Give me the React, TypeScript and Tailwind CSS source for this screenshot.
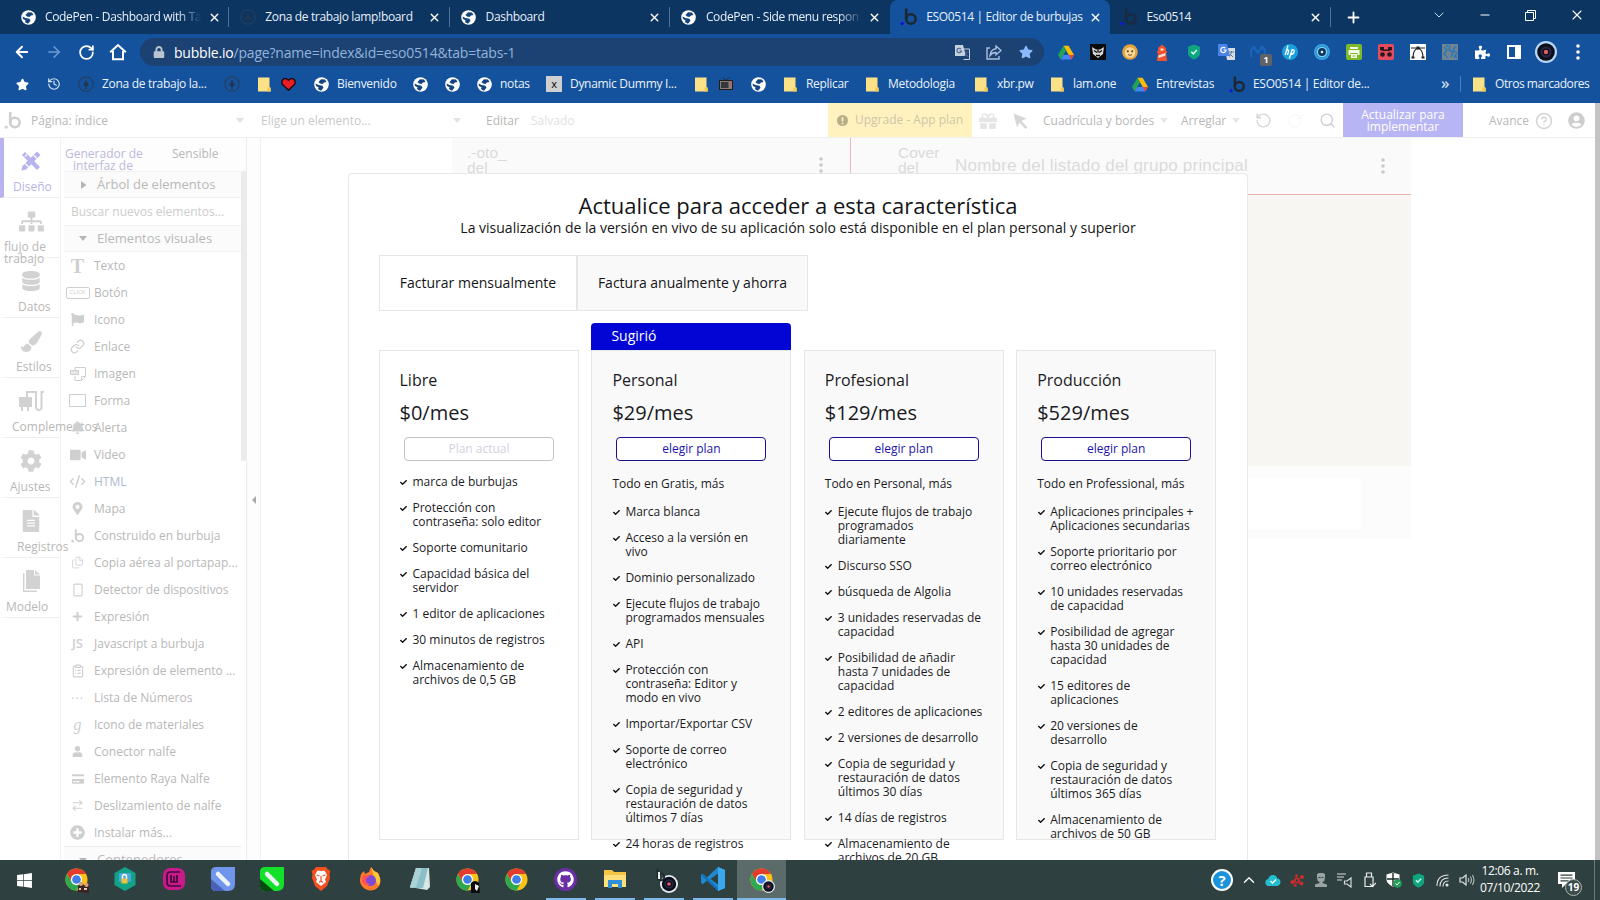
import React from "react";
import {
  FaGlobeAmericas, FaStar, FaPuzzlePiece, FaSitemap, FaDatabase, FaPaintBrush, FaCog, FaFileAlt, FaFlag,
  FaBell, FaVideo, FaMapMarkerAlt, FaPlus, FaUser, FaPlusCircle, FaWindows, FaGift,
  FaUserCircle, FaGithub, FaLock, FaCheck, FaCreditCard,
} from "react-icons/fa";
import {
  ArrowLeft, ArrowRight, RotateCw, X, Plus, ChevronDown, ChevronUp, Minus, Link, CodeXml, Files, Smartphone,
  ClipboardList, History, CircleHelp, Search, RotateCcw, ArrowRightLeft,
} from "lucide-react";

type Kids = { children?: React.ReactNode; className?: string };

const Cell = ({ children, className = "w-8" }: Kids) => (
  <div className={"flex shrink-0 items-center justify-center " + className}>{children}</div>
);

const Bubble = ({ size = 18, body = "#1c2733", dot = "#1010e0" }) => (
  <svg width={size} height={size} viewBox="0 0 18 18" fill="none">
    <path d="M6.2 0.5V11" stroke={body} strokeWidth="2.6" />
    <circle cx="10.9" cy="11" r="4.7" stroke={body} strokeWidth="2.6" />
    <circle cx="2.2" cy="15.6" r="1.7" fill={dot} />
  </svg>
);

const Lamp = () => (
  <svg width="16" height="16" viewBox="0 0 16 16" fill="none">
    <circle cx="8" cy="8" r="7.2" stroke="#24405f" strokeWidth="1.2" />
    <path d="M8 3.5l3 6.5H5z" fill="#24364d" />
    <path d="M8 10v3" stroke="#24364d" strokeWidth="1.5" />
  </svg>
);

const Globe = () => (
  <svg width="15" height="15" viewBox="0 0 15 15">
    <circle cx="7.5" cy="7.5" r="7.300" fill="#fff" />
    <path d="M7 2.200l4 .3 1.500 2.500-2.500.5-1.500 1.500-2.500-.5L4.500 5z" fill="#15457f" />
    <path d="M1.500 6.500l3 1.500 4 .8 1 2-2.500 3-3-1.500.5-2L2 9z" fill="#15457f" />
  </svg>
);

const Folder = () => (
  <svg width="13" height="15" viewBox="0 0 13 15">
    <path d="M0 0.5h11.5V10l1.2 1v3.5H0z" fill="#fce287" />
    <path d="M9.5 10.5h3v4h-3z" fill="#f2c94c" />
  </svg>
);

const Drive = () => (
  <svg width="16" height="15" viewBox="0 0 16 15">
    <path d="M5.4 0.8h5.2L16 10h-5.2z" fill="#fbbc04" />
    <path d="M5.4 0.8L8 5.3 2.7 14.4 0 10z" fill="#23a455" />
    <path d="M5.3 10H16l-2.7 4.4H2.7z" fill="#4285f4" />
    <path d="M10.8 10H16l-2.7 4.4z" fill="#ea4335" />
  </svg>
);

const Chrome = ({ size = 23 }) => (
  <svg width={size} height={size} viewBox="0 0 24 24">
    <circle cx="12" cy="12" r="11.5" fill="#fbc116" />
    <path d="M2.04 6.25A11.5 11.5 0 0 1 21.96 6.25H12A5.75 5.75 0 0 0 7 14.9z" fill="#e33b2e" />
    <path d="M2.04 6.25L7 14.9A5.75 5.75 0 0 0 17 14.9L12 23.5A11.5 11.5 0 0 1 2.04 6.25z" fill="#2da94f" />
    <circle cx="12" cy="12" r="5.8" fill="#fff" />
    <circle cx="12" cy="12" r="4.5" fill="#3f7ee8" />
  </svg>
);

const Disc = ({ size = 20, ring = "#b9d7f5" }) => (
  <svg width={size} height={size} viewBox="0 0 22 22">
    <circle cx="11" cy="11" r="11" fill={ring} />
    <circle cx="11" cy="11" r="8.8" fill="#0b0f1c" />
    <circle cx="11" cy="11" r="4.6" fill="none" stroke="#2b2740" strokeWidth="2" />
    <circle cx="11" cy="11" r="2.2" fill="#e65a6b" />
  </svg>
);

const ShieldOk = ({ size = 16 }) => (
  <svg width={size} height={size} viewBox="0 0 16 16">
    <path d="M8 0.5l6 2.3v6.4c0 2.8-3 5.2-6 6.3-3-1.1-6-3.5-6-6.3V2.8z" fill="#0fa57f" />
    <path d="M5.3 7.8l2 2 3.6-3.8" fill="none" stroke="#d6fff2" strokeWidth="1.5" />
  </svg>
);

const Home = () => (
  <svg width="18" height="18" viewBox="0 0 18 18" fill="none" stroke="#fff" strokeWidth="2">
    <path d="M1.2 9.3L9 2l7.8 7.3" />
    <path d="M4 8v8.2h10V8" />
  </svg>
);

const Kebab = ({ color = "#fff" }) => (
  <svg width="4" height="16" viewBox="0 0 4 16" fill={color}>
    <circle cx="2" cy="2" r="1.8" />
    <circle cx="2" cy="8" r="1.8" />
    <circle cx="2" cy="14" r="1.8" />
  </svg>
);

const Caret = ({ className = "" }) => (
  <svg className={className} width="8" height="5" viewBox="0 0 8 5">
    <path d="M0 0h8L4 5z" fill="currentColor" />
  </svg>
);

const tabs = [
  { icon: <Globe />, title: "CodePen - Dashboard with Ta", fade: true },
  { icon: <Lamp />, title: "Zona de trabajo lamp!board" },
  { icon: <Globe />, title: "Dashboard" },
  { icon: <Globe />, title: "CodePen - Side menu respon", fade: true, last: true },
  { icon: <Bubble />, title: "ESO0514 | Editor de burbujas", active: true },
  { icon: <Bubble body="#1a2b40" />, title: "Eso0514" },
];

const TabStrip = () => (
  <div className="flex h-[34px] items-stretch bg-[#0d3562] pl-[9px] text-[12px] text-[#e6f0fa]">
    {tabs.map((t) => (
      <div
        key={t.title}
        className={
          "flex w-[220.3px] shrink-0 items-center " +
          (t.active ? "rounded-t-lg bg-[#14529d]" : "")
        }
      >
        <Cell className="ml-[9px] w-5">{t.icon}</Cell>
        <div
          className={
            "ml-[7px] w-[158px] overflow-hidden whitespace-nowrap tracking-[-0.35px] " +
            (t.fade ? "[mask-image:linear-gradient(to_right,black_84%,transparent_99%)]" : "")
          }
        >
          {t.title}
        </div>
        <Cell className="ml-[3px] w-4">
          <X size={13} strokeWidth={2.6} color="#fff" />
        </Cell>
        <div className={"ml-auto h-5 w-px " + (t.active || t.last ? "" : "bg-[#4f7299]")} />
      </div>
    ))}
    <Cell className="ml-[3px] w-10"><Plus size={17} strokeWidth={2.6} color="#fff" /></Cell>
    <Cell className="ml-[40px] w-[50px] pb-1"><ChevronDown size={16} strokeWidth={1.5} color="#cfe0f2" /></Cell>
    <Cell className="w-[43px] pb-1"><Minus size={14} strokeWidth={1.8} color="#fff" /></Cell>
    <Cell className="w-[47px] pb-1">
      <svg width="11" height="11" viewBox="0 0 11 11" fill="none" stroke="#fff">
        <path d="M0.5 2.5h8v8h-8zM2.5 2.5v-2h8v8h-2" />
      </svg>
    </Cell>
    <Cell className="w-[46px] pb-1"><X size={16} strokeWidth={1.6} color="#fff" /></Cell>
  </div>
);

const extensions: React.ReactNode[] = [
  <Drive />,
  <svg width="16" height="16" viewBox="0 0 16 16"><rect width="16" height="16" fill="#0a0a0c" /><path d="M2 3l4 2.5h4L14 3l-1 7-5 4-5-4z" fill="#d8d8d8" /><path d="M4 6.5l3 2M12 6.5l-3 2M6 11.5h4M8 5.5v3" stroke="#0a0a0c" strokeWidth="1.3" /></svg>,
  <svg width="16" height="16" viewBox="0 0 16 16"><circle cx="8" cy="8" r="7.8" fill="#e8a23a" /><circle cx="8" cy="8.5" r="5.3" fill="#f6d79a" /><circle cx="5.8" cy="7.3" r="1" fill="#5a3411" /><circle cx="10.2" cy="7.3" r="1" fill="#5a3411" /><path d="M6 10.5q2 1.8 4 0" stroke="#8a4b17" fill="none" /></svg>,
  <svg width="16" height="17" viewBox="0 0 16 17"><path d="M4 4L8 0.5 12 4v3h1v2h-1l1.2 8H2.8L4 9H3V7h1z" fill="#f0512e" /><path d="M4.5 11.5l7-2.5v2.5l-7 2.5zM6.5 4.5h3v2h-3z" fill="#ffe8d8" /></svg>,
  <ShieldOk />,
  <svg width="17" height="16" viewBox="0 0 17 16"><path d="M7 4h10v12H9z" fill="#d8dde4" /><path d="M0 0h9l3 12H0z" fill="#4a83ea" /><path d="M7.3 4.2A2.6 2.6 0 1 0 8 6H5.5" fill="none" stroke="#fff" strokeWidth="1.2" /><path d="M11 8h5M13.5 7v1.5l-2 4M12 10l3 3" stroke="#68788e" fill="none" /></svg>,
  <div className="relative">
    <svg width="16" height="14" viewBox="0 0 16 14"><path d="M1 12V5l3-3 4 6 4-6 3 3v7" fill="none" stroke="#1b63b4" strokeWidth="2.6" /></svg>
    <div className="absolute top-[9px] left-[10px] flex h-3 w-3 items-center justify-center rounded-[2px] bg-[#5f6368] text-[9px] font-bold text-white">1</div>
  </div>,
  <svg width="16" height="16" viewBox="0 0 16 16"><circle cx="8" cy="8" r="8" fill="#1aa0dc" /><path d="M6 1.5L3.2 11M4.7 6.5q2.5-1.5 1.8 1L5.5 11M10.3 5L7.3 14.5M9.8 6.5q3-1.5 2.2 1.2-1 3-3.5 2.8" fill="none" stroke="#fff" strokeWidth="1.3" /></svg>,
  <svg width="16" height="16" viewBox="0 0 16 16"><circle cx="8" cy="8" r="7.300" fill="#2f8fd0" stroke="#39a6e6" strokeWidth="1.4" /><circle cx="8" cy="8" r="4.600" fill="#10375e" stroke="#7fd0f5" strokeWidth="1.4" /><circle cx="8" cy="8" r="1.3" fill="#dff3ff" /></svg>,
  <svg width="16" height="16" viewBox="0 0 16 16"><rect width="16" height="16" rx="2" fill="#7db928" /><path d="M4 3h8v2H4zM2.5 6h11v5h-2V9h-7v2h-2zM5 10h6v4H5z" fill="#f4fbe8" /><path d="M6.5 12h3" stroke="#7db928" /></svg>,
  <svg width="16" height="16" viewBox="0 0 16 16"><rect width="16" height="16" rx="2" fill="#e44b5d" /><path d="M2 3h4v2.500h4V3h4v3l-3 1H5L2 6z" fill="#26181d" /><circle cx="4.500" cy="10.500" r="2.300" fill="#26181d" /><circle cx="11.500" cy="10.500" r="2.300" fill="#26181d" /></svg>,
  <svg width="16" height="16" viewBox="0 0 16 16"><rect width="16" height="16" fill="#fff" /><path d="M1 4h14M3 14C3 8 5 4.5 8 4.5S13 8 13 14" fill="none" stroke="#222" strokeWidth="1.1" /><path d="M6.5 2.5h3v3h-3zM1.5 12.5h3v2h-3zM11.5 12.5h3v2h-3z" fill="#222" /></svg>,
  <svg width="16" height="16" viewBox="0 0 16 16"><rect width="16" height="16" fill="#71848f" /><path d="M2 3l3 3-3 4 4 4M8 1l-1 5 4 2-2 5M14 2l-3 4 4 3-3 5M4 1l2 2M12 11l3 3" fill="none" stroke="#2d78b8" strokeWidth="1.5" /></svg>,
  <FaPuzzlePiece size={15} color="#fff" />,
  <svg width="14" height="14" viewBox="0 0 14 14"><path d="M1 1h12v12H1z" fill="none" stroke="#fff" strokeWidth="2" /><path d="M8 1h5v12H8z" fill="#fff" /></svg>,
  <Disc size={22} />,
  <Kebab />,
];

const AddressBar = () => (
  <div className="flex h-9 items-center bg-[#14529d] pl-[6px]">
    <Cell><ArrowLeft size={18} strokeWidth={2.5} color="#fff" /></Cell>
    <Cell><ArrowRight size={18} strokeWidth={2} color="#6e9bd0" /></Cell>
    <Cell><RotateCw size={17} strokeWidth={2.5} color="#fff" /></Cell>
    <Cell><Home /></Cell>
    <div className="ml-[6px] flex h-7 w-[904px] shrink-0 items-center rounded-full bg-[#1b4273]">
      <Cell className="ml-[3px] w-[31px]"><FaLock size={12} color="#b9c4d0" /></Cell>
      <div className="text-[14px] tracking-[-0.200px] whitespace-nowrap text-[#92b4dc]">
        <span className="text-white">bubble.io</span>/page?name=index&amp;id=eso0514&amp;tab=tabs-1
      </div>
      <Cell className="ml-auto w-8">
        <svg width="15" height="15" viewBox="0 0 15 15"><path d="M0 0h8l3 11H0z" fill="#c4d0de" /><path d="M8 4h6.5v10.5H8.5" fill="none" stroke="#c4d0de" /><path d="M6 4A2.3 2.3 0 1 0 6.5 6H4.5M10 7h4M12 7l-2 4M10.5 9l3 3" fill="none" stroke="#44628a" strokeWidth="1.1" /></svg>
      </Cell>
      <Cell>
        <svg width="16" height="15" viewBox="0 0 16 15" fill="none" stroke="#a9c0dc" strokeWidth="1.4"><path d="M4 3H1v11h12v-3" /><path d="M10 1l5 4.5-5 4.3V7.5C7.5 7.3 5.5 8.5 4 10.5 4.5 6 7 4 10 3.7z" /></svg>
      </Cell>
      <Cell className="mr-[2px] w-8"><FaStar size={14} color="#8ab8fa" /></Cell>
    </div>
    <div className="ml-[6px] flex">
      {extensions.map((e, i) => <Cell key={i} className="h-8 w-8">{e}</Cell>)}
    </div>
  </div>
);

const BookmarkBar = () => (
  <div className="flex h-[33px] items-center bg-[#14529d] pb-[5px] pl-[6px] text-[12px] tracking-[-0.3px] whitespace-nowrap text-[#eaf2fb]">
    <Cell><FaStar size={13} color="#fff" /></Cell>
    <Cell><History size={14} strokeWidth={2} color="#dbe8f6" /></Cell>
    <Cell><Lamp /></Cell>
    <div className="w-[114px] shrink-0">Zona de trabajo la...</div>
    <Cell><Lamp /></Cell>
    <Cell className="ml-1 w-6"><Folder /></Cell>
    <Cell className="w-6">
      <svg width="15" height="13" viewBox="0 0 15 13"><path d="M7.5 12.3L1 6V2.5L3 .7h2.5l2 1.8 2-1.8H12l2 1.8V6z" fill="#ea1c24" stroke="#16090b" strokeWidth="1.3" /></svg>
    </Cell>
    <Cell className="ml-[5px] w-8"><Globe /></Cell>
    <div className="w-[67px] shrink-0">Bienvenido</div>
    <Cell><Globe /></Cell>
    <Cell><Globe /></Cell>
    <Cell><Globe /></Cell>
    <div className="w-[38px] shrink-0">notas</div>
    <Cell><div className="flex h-4 w-4 items-center justify-center bg-[#cfcfcf] text-[11px] text-black">x</div></Cell>
    <div className="w-[115px] shrink-0">Dynamic Dummy I...</div>
    <Cell><Folder /></Cell>
    <Cell className="w-[18px]">
      <svg width="14" height="14" viewBox="0 0 14 14"><path d="M4 0.5l3 3 3-3" stroke="#222" fill="none" /><rect x="0.5" y="3.5" width="13" height="9" fill="#8d7b78" stroke="#241c1c" /><rect x="2" y="5" width="7.5" height="6" fill="#33393d" /><path d="M11 5.5h1.5v2H11z" fill="#e0555b" /></svg>
    </Cell>
    <Cell className="ml-[7px] w-8"><Globe /></Cell>
    <Cell><Folder /></Cell>
    <div className="w-[50px] shrink-0">Replicar</div>
    <Cell><Folder /></Cell>
    <div className="w-[77px] shrink-0">Metodologia</div>
    <Cell><Folder /></Cell>
    <div className="w-[44px] shrink-0">xbr.pw</div>
    <Cell><Folder /></Cell>
    <div className="w-[51px] shrink-0">lam.one</div>
    <Cell><Drive /></Cell>
    <div className="w-[65px] shrink-0">Entrevistas</div>
    <Cell><Bubble size={17} /></Cell>
    <div className="w-[177px] shrink-0">ESO0514 | Editor de...</div>
    <Cell className="h-4 w-[31px] border-r border-[#4a80bd] text-[17px] leading-none"><span className="pb-1">»</span></Cell>
    <Cell className="ml-[2px] w-8"><Folder /></Cell>
    <div className="tracking-[-0.45px]">Otros marcadores</div>
  </div>
);

const AppBar = () => (
  <div className="flex h-[34px] shrink-0 items-center pt-px text-[12px] whitespace-nowrap text-[#b8b8b8]">
    <Cell className="ml-[4px] w-[18px]"><Bubble body="#cfcfcf" dot="#cfcfcf" size={19} /></Cell>
    <div className="ml-[9px] w-[205px] shrink-0">Página: índice</div>
    <Caret className="text-[#e2e2e2]" />
    <div className="ml-[17px] w-[192px] shrink-0 text-[#c9c9c9]">Elige un elemento...</div>
    <Caret className="text-[#e2e2e2]" />
    <div className="ml-[25px] w-[45px] shrink-0">Editar</div>
    <div className="w-[297px] shrink-0 text-[#e2e2e2]">Salvado</div>
    <div className="-mt-px flex h-[34px] w-[144px] shrink-0 items-center bg-[#fff2bf] text-[#cec6a8]">
      <Cell className="ml-[9px] w-[11px]">
        <svg width="11" height="11" viewBox="0 0 10 10"><circle cx="5" cy="5" r="5" fill="#b8ae88" /><path d="M5 2v4M5 7v1.3" stroke="#fff2bf" strokeWidth="1.5" /></svg>
      </Cell>
      <span className="ml-[7px]">Upgrade - App plan</span>
    </div>
    <Cell><FaGift size={18} color="#e6e6e6" /></Cell>
    <Cell>
      <svg width="15" height="16" viewBox="0 0 15 16"><path d="M0.5 0.5l13 5-5 2.5 6 6.5-2 1.5-6-6.5-2.5 4.5z" fill="#d6d6d6" /></svg>
    </Cell>
    <div className="ml-[7px] w-[117px] shrink-0">Cuadrícula y bordes</div>
    <Caret className="text-[#e6e6e6]" />
    <div className="ml-[13px] w-[51px] shrink-0">Arreglar</div>
    <Caret className="text-[#e6e6e6]" />
    <Cell className="ml-[7px] w-8"><RotateCcw size={17} strokeWidth={2} color="#d6d6d6" /></Cell>
    <Cell><RotateCw size={16} strokeWidth={1.5} color="#f6f6f6" /></Cell>
    <Cell className="w-[33px]"><Search size={17} strokeWidth={2} color="#cfcfcf" /></Cell>
    <div className="-mt-px ml-[-1px] flex h-[34px] w-[120px] shrink-0 flex-col items-center justify-center bg-[#b8b5f4] pt-[2px] text-[12px] leading-[12px] text-white">
      <span>Actualizar para</span>
      <span>implementar</span>
    </div>
    <div className="ml-[26px] w-[46px] shrink-0">Avance</div>
    <CircleHelp size={18} strokeWidth={2} color="#d3d3d3" className="shrink-0" />
    <Cell className="ml-[14px] w-[18px]"><FaUserCircle size={17} color="#cdcdcd" /></Cell>
  </div>
);

const Tools = () => (
  <svg width="22" height="22" viewBox="0 0 22 22">
    <path d="M2 5l3-3 15 15-3 3z" fill="#b8b2ef" />
    <path d="M17 1.5L20.5 5 6 19.5 1.5 20.5l1-4.5z" fill="#b8b2ef" />
    <path d="M13.5 5l3.5 3.5M5 13.5L8.5 17M7 4.5L5 6.5" stroke="#fff" strokeWidth="1.2" />
  </svg>
);

const Plug = () => (
  <svg width="25" height="22" viewBox="0 0 25 22" fill="none">
    <path d="M0 7h13v10H0zM2 17h2v4H2zM8 17h2v4H8z" fill="#d2d2d2" />
    <path d="M8 7V2h9v14q0 4 3 4t2.5-4V2h3" stroke="#d2d2d2" strokeWidth="2" />
  </svg>
);

const Pages = () => (
  <svg width="17" height="22" viewBox="0 0 17 22">
    <path d="M3 0h8v5.5h6V19H3z" fill="#d2d2d2" />
    <path d="M12 0l5 4.5h-5z" fill="#d2d2d2" />
    <path d="M0.7 3v18.3H14" fill="none" stroke="#d2d2d2" strokeWidth="1.4" />
  </svg>
);

const nav = [
  { icon: <Tools />, label: "Diseño", pad: "pl-[9px]", on: true },
  { icon: <FaSitemap size={25} />, label: "flujo de trabajo", pad: "w-[50px]" },
  { icon: <FaDatabase size={20} />, label: "Datos", pad: "pl-[14px]" },
  { icon: <FaPaintBrush size={21} />, label: "Estilos", pad: "pl-[12px]" },
  { icon: <Plug />, label: "Complementos", pad: "pl-[8px]" },
  { icon: <FaCog size={22} />, label: "Ajustes", pad: "pl-[6px]" },
  { icon: <FaFileAlt size={22} />, label: "Registros", pad: "pl-[13px]" },
  { icon: <Pages />, label: "Modelo", pad: "pl-[2px]" },
];

const NavRail = () => (
  <div className="w-[61px] shrink-0 border-r border-[#f2f2f2]">
    {nav.map((n) => (
      <div
        key={n.label}
        className={
          "h-[60px] border-b border-l-4 border-b-[#f0f0f0] " +
          (n.on ? "border-l-[#b8b2f0] text-[#b8b4e4]" : "border-l-white text-[#b8b8b8]")
        }
      >
        <div className={"flex h-[40px] items-center justify-center pt-[6px] pr-[2px] " + (n.on ? "" : "text-[#d2d2d2]")}>{n.icon}</div>
        <div className={"pt-[3px] text-[12px] leading-[12px] " + n.pad}>{n.label}</div>
      </div>
    ))}
  </div>
);

const PictureIcon = () => (
  <svg width="16" height="14" viewBox="0 0 16 14" fill="none" stroke="currentColor">
    <path d="M5 3V.5h10.5v9l-4 4H5V9M15.5 9.5h-4v4" />
    <path d="M0.5 3.5h8v4h-8z" fill="currentColor" fillOpacity="0.5" />
  </svg>
);

const elements: [React.ReactNode, string][] = [
  [<span className="font-['Liberation_Serif'] text-[20px] leading-none font-bold">T</span>, "Texto"],
  [<span className="flex h-3 w-6 items-center justify-center rounded-[2px] border border-[#cfcfcf] text-[6px]">CLICK</span>, "Botón"],
  [<FaFlag size={13} />, "Icono"],
  [<Link size={15} />, "Enlace"],
  [<PictureIcon />, "Imagen"],
  [<span className="h-[13px] w-[17px] border border-[#cfcfcf]" />, "Forma"],
  [<FaBell size={13} />, "Alerta"],
  [<FaVideo size={16} />, "Video"],
  [<CodeXml size={17} />, "HTML"],
  [<FaMapMarkerAlt size={13} />, "Mapa"],
  [<Bubble body="#d0d0d0" dot="#d0d0d0" size={14} />, "Construido en burbuja"],
  [<Files size={13} strokeWidth={1.5} />, "Copia aérea al portapap..."],
  [<Smartphone size={14} />, "Detector de dispositivos"],
  [<FaPlus size={11} />, "Expresión"],
  [<span className="text-[13px] font-semibold">JS</span>, "Javascript a burbuja"],
  [<ClipboardList size={14} />, "Expresión de elemento ..."],
  [<span className="pb-[5px] text-[13px] tracking-[1px]">...</span>, "Lista de Números"],
  [<span className="font-['Liberation_Serif'] text-[16px] italic">g</span>, "Icono de materiales"],
  [<FaUser size={11} />, "Conector nalfe"],
  [<FaCreditCard size={12} />, "Elemento Raya Nalfe"],
  [<ArrowRightLeft size={13} />, "Deslizamiento de nalfe"],
  [<FaPlusCircle size={15} />, "Instalar más..."],
];

const Palette = () => (
  <div className="flex w-[186px] shrink-0 flex-col overflow-hidden border-r border-[#ececec] text-[#b8b8b8]">
    <div className="flex h-[33px] shrink-0 overflow-hidden bg-[#fdfdfd] pt-[10px] text-[12px] leading-[12px]">
      <div className="ml-[4px] w-[76px] text-center whitespace-pre text-[#bcbada]">{"Generador de\ninterfaz de"}</div>
      <div className="ml-[31px]">Sensible</div>
    </div>
    <div className="flex min-h-0 flex-1">
      <div className="ml-[3px] w-[177px] shrink-0">
        <div className="flex h-[27px] items-center border-y border-[#f1f1f1] bg-[#fbfbfb] text-[13px]">
          <svg width="6" height="8" viewBox="0 0 6 8" className="ml-[17px]"><path d="M0 0l5.5 4L0 8z" fill="#b5b5b5" /></svg>
          <span className="ml-[10px]">Árbol de elementos</span>
        </div>
        <div className="flex h-[27px] items-center pt-px pl-[7px] text-[12px] text-[#cccccc]">Buscar nuevos elementos...</div>
        <div className="flex h-[27px] items-center border-y border-[#f1f1f1] bg-[#fbfbfb] text-[13px]">
          <Caret className="ml-[15px] text-[#b5b5b5]" />
          <span className="ml-[10px]">Elementos visuales</span>
        </div>
        {elements.map(([icon, label]) => (
          <div key={label} className="flex h-[27px] items-center text-[12px] whitespace-nowrap">
            <Cell className="w-[27px] text-[#cfcfcf]">{icon}</Cell>
            <span className={"ml-[3px] " + (label === "HTML" ? "text-[#b0b8d0]" : "")}>{label}</span>
          </div>
        ))}
        <div className="flex h-[27px] items-center border-t border-[#ececec] bg-[#fbfbfb] text-[13px]">
          <Caret className="ml-[15px] text-[#b5b5b5]" />
          <span className="ml-[10px]">Contenedores</span>
        </div>
      </div>
      <div className="h-[290px] w-[5px] bg-[#ebebeb]" />
    </div>
  </div>
);

type Plan = { name: string; price: string; button: string; lead?: string; items: string[]; suggested?: boolean };

const plans: Plan[] = [
  {
    name: "Libre", price: "$0/mes", button: "Plan actual",
    items: ["marca de burbujas", "Protección con\ncontraseña: solo editor", "Soporte comunitario", "Capacidad básica del\nservidor", "1 editor de aplicaciones", "30 minutos de registros", "Almacenamiento de\narchivos de 0,5 GB"],
  },
  {
    name: "Personal", price: "$29/mes", button: "elegir plan", lead: "Todo en Gratis, más", suggested: true,
    items: ["Marca blanca", "Acceso a la versión en\nvivo", "Dominio personalizado", "Ejecute flujos de trabajo\nprogramados mensuales", "API", "Protección con\ncontraseña: Editor y\nmodo en vivo", "Importar/Exportar CSV", "Soporte de correo\nelectrónico", "Copia de seguridad y\nrestauración de datos\núltimos 7 días", "24 horas de registros"],
  },
  {
    name: "Profesional", price: "$129/mes", button: "elegir plan", lead: "Todo en Personal, más",
    items: ["Ejecute flujos de trabajo\nprogramados\ndiariamente", "Discurso SSO", "búsqueda de Algolia", "3 unidades reservadas de\ncapacidad", "Posibilidad de añadir\nhasta 7 unidades de\ncapacidad", "2 editores de aplicaciones", "2 versiones de desarrollo", "Copia de seguridad y\nrestauración de datos\núltimos 30 días", "14 días de registros", "Almacenamiento de\narchivos de 20 GB"],
  },
  {
    name: "Producción", price: "$529/mes", button: "elegir plan", lead: "Todo en Professional, más",
    items: ["Aplicaciones principales +\nAplicaciones secundarias", "Soporte prioritario por\ncorreo electrónico", "10 unidades reservadas\nde capacidad", "Posibilidad de agregar\nhasta 30 unidades de\ncapacidad", "15 editores de\naplicaciones", "20 versiones de\ndesarrollo", "Copia de seguridad y\nrestauración de datos\núltimos 365 días", "Almacenamiento de\narchivos de 50 GB"],
  },
];

const PlanCard = ({ plan }: { plan: Plan }) => (
  <div className="w-[200px] shrink-0">
    <div className={"flex h-[27px] items-center pb-[2px] pl-5 text-[14px] text-white " + (plan.suggested ? "rounded-t bg-[#0205d3]" : "")}>
      {plan.suggested ? "Sugirió" : ""}
    </div>
    <div className={"h-[490px] border border-[#e6e6e6] text-[#1b1b1f] " + (plan.lead ? "bg-[#f9f9f9] pl-[20px]" : "bg-white pl-[19.500px]")}>
      <div className="mt-[17px] h-6 text-[16px] leading-6">{plan.name}</div>
      <div className="mt-[7px] h-7 text-[20px] leading-7">{plan.price}</div>
      <div
        className={
          "mt-[10px] flex h-6 w-[150px] items-center justify-center rounded border bg-white text-[12px] " +
          (plan.lead ? "ml-[4px] border-[#1a0f8c] text-[#1c14a8]" : "ml-[4.500px] border-[#c3c3cb] text-[#d2d2de]")
        }
      >
        {plan.button}
      </div>
      {plan.lead ? <div className="mt-[16px] mb-[14px] text-[12px] leading-[14px] whitespace-nowrap">{plan.lead}</div> : <div className="h-[14px]" />}
      <div className="flex flex-col gap-3 text-[12px] leading-[14px]">
        {plan.items.map((it) => (
          <div key={it} className="flex">
            <Cell className="h-[14px] w-[8px]"><FaCheck size={7} color="#111" /></Cell>
            <span className="ml-[5px] whitespace-pre">{it}</span>
          </div>
        ))}
      </div>
    </div>
  </div>
);

const Modal = () => (
  <div className="absolute top-[35px] left-[348px] h-[760px] w-[900px] rounded border border-[#e8e8e8] bg-white text-[#151518]">
    <div className="mt-[17px] text-center text-[22px] leading-[28px]">Actualice para acceder a esta característica</div>
    <div className="text-center text-[14px] leading-[18px]">La visualización de la versión en vivo de su aplicación solo está disponible en el plan personal y superior</div>
    <div className="mt-[18px] ml-[30px] flex h-[56px] text-[14px]">
      <div className="flex w-[198px] items-center justify-center border border-[#e6e6e6] pb-[2px]">Facturar mensualmente</div>
      <div className="flex w-[231px] items-center justify-center border border-[#e6e6e6] bg-[#f9f9f9] pb-[2px]">Factura anualmente y ahorra</div>
    </div>
    <div className="mt-[12px] ml-[30px] flex gap-[12.4px]">
      {plans.map((p) => <PlanCard key={p.name} plan={p} />)}
    </div>
  </div>
);

const Canvas = () => (
  <div className="flex flex-1 pl-[191px]">
    <div className="w-[959px]">
      <div className="flex h-[56px] bg-[#fafafa] font-['Liberation_Sans',sans-serif] text-[15.5px] leading-[15px] text-[#dadada]">
        <div className="w-[361px] pt-[7px] pl-[15px] whitespace-pre">{".-oto_\ndel"}</div>
        <div className="w-[37px] pt-[19px] pl-[6px]"><Kebab color="#c9c9c9" /></div>
        <div className="w-px bg-[#f0b6bd]" />
        <div className="w-[104px] pt-[7px] pl-[47px] whitespace-pre">{"Cover\ndel"}</div>
        <div className="w-[426px] pt-[20px] text-[17px] tracking-[0.2px] whitespace-nowrap">Nombre del listado del grupo principal</div>
        <div className="pt-[20px]"><Kebab color="#c9c9c9" /></div>
      </div>
      <div className="h-[272px] border-t border-[#e9b3b3] bg-[#f8f6f3]" />
      <div className="h-[73px] bg-[#fcfcfc] pt-[12px] pr-[50px] pb-[10px]"><div className="h-full bg-white" /></div>
    </div>
  </div>
);

const Editor = () => (
  <div className="flex h-[757px] overflow-hidden bg-white">
    <div className="flex min-w-0 flex-1 flex-col">
      <AppBar />
      <div className="relative flex min-h-0 flex-1 border-t border-[#f0f0f0]">
        <NavRail />
        <Palette />
        <div className="flex w-[14px] shrink-0 items-center border-r border-[#f0f0f0] bg-[#fdfdfd]">
          <svg width="4" height="8" viewBox="0 0 4 8" className="mb-[-1px] ml-[5px]"><path d="M4 0v8L0 4z" fill="#a9a9a9" /></svg>
        </div>
        <Canvas />
        <Modal />
      </div>
    </div>
    <div className="w-[5px] shrink-0 bg-[#c3c3c3]" />
  </div>
);

const Slant = ({ a, b }: { a: string; b: string }) => (
  <svg width="24" height="24" viewBox="0 0 24 24">
    <path d="M5 0h19v17q0 7-7 7H5q-5 0-5-5V5q0-5 5-5z" fill={a} />
    <path d="M0 12l14 12H5q-5 0-5-5z" fill={b} />
    <path d="M7 7l10 10" stroke="#eef3f6" strokeWidth="4.5" strokeLinecap="round" />
  </svg>
);

const Badged = ({ children }: Kids) => (
  <div className="relative">
    <Chrome />
    <div className="absolute right-[-2px] bottom-[-2px]">{children}</div>
  </div>
);

const apps: { icon: React.ReactNode; open?: boolean; active?: boolean }[] = [
  { icon: <Badged><svg width="13" height="13" viewBox="0 0 13 13"><path d="M1 12V6l3-4 3 3 5 1v7z" fill="#3a2320" /><circle cx="4" cy="4" r="2" fill="#d9a17c" /><circle cx="9.5" cy="5" r="2" fill="#d9a17c" /><path d="M2 9h2M7 9h3" stroke="#e9c9b2" strokeWidth="2" /></svg></Badged> },
  { icon: <svg width="22" height="24" viewBox="0 0 22 24"><path d="M11 0l10.5 6v12L11 24 .5 18V6z" fill="#12a288" /><rect x="5" y="6" width="12" height="9" rx="1" fill="#4aa8d8" /><path d="M8.500 12V9.5a2 2 0 0 1 4 0V12" fill="none" stroke="#fff" strokeWidth="1.5" /><rect x="7.500" y="11.5" width="6" height="5" fill="#f0c23c" /></svg> },
  { icon: <svg width="24" height="24" viewBox="0 0 24 24"><rect x="1" y="1" width="22" height="22" rx="7" fill="#c9198b" /><path d="M18 5H8.5Q5 5 5 8.5v7Q5 19 8.5 19H19M9 8v7h6V8M12 9v6" fill="none" stroke="#3f0b38" strokeWidth="1.7" /></svg> },
  { icon: <Slant a="#6f96ea" b="#4a5fb8" /> },
  { icon: <Slant a="#12e02a" b="#064a12" /> },
  { icon: <svg width="20" height="24" viewBox="0 0 20 24"><path d="M5 0h10l2 2.5 2.5 1.5-1 3 .5 4-3 8-6 5-6-5-3-8 .5-4-1-3L3 2.5z" fill="#f4501e" /><path d="M10 4l3.5-.5L16 8l-2 4.5 1 2.5-5 4-5-4 1-2.5L4 8l2.5-4.5z" fill="#fff" /><path d="M5.5 8l3 1M14.5 8l-3 1M10 9v5l-2 1.5M10 14l2 1.5" stroke="#f4501e" strokeWidth="1.2" fill="none" /></svg> },
  { icon: <svg width="23" height="24" viewBox="0 0 23 24"><path d="M2 7l3-3 1 3 4-2 2-5 3 4 4 2 2 5c2 8-4 12.5-9.5 12.5S0 18 1 12z" fill="#ff7a2a" /><path d="M12 0l3 4 4 2 2 5q1 5-2 8l-4-9z" fill="#ffc535" /><circle cx="11.5" cy="13.5" r="5.5" fill="#7b4bd8" /><path d="M4 9q4-2 7 1-4 0-4 3 0 4 5 4-7 3-9-3z" fill="#ff4f5e" /></svg> },
  { icon: <svg width="23" height="24" viewBox="0 0 23 24"><path d="M8 1h13l1 19-3 3-17-3z" fill="#d8e6e6" /><path d="M8 1h12l-5 20H2z" fill="#8bbfc8" /><path d="M8 1h6L8 20.5H2z" fill="#a9d2d6" /></svg> },
  { icon: <Badged><svg width="11" height="13" viewBox="0 0 11 13"><path d="M1 13V3q4-4 8 0l1 10z" fill="#0c0c10" /><path d="M5 4l4 2-2 5-2-2z" fill="#f3efe8" /></svg></Badged> },
  { icon: <Chrome /> },
  { icon: <div className="flex h-[23px] w-[23px] items-center justify-center rounded-full bg-[#6b2fa5]"><FaGithub size={17} color="#fff" /></div>, open: true },
  { icon: <svg width="22" height="20" viewBox="0 0 22 20"><path d="M0 1h8l2 2h12v15H0z" fill="#f5c445" /><path d="M0 6h22v12H0z" fill="#ffdf7c" /><path d="M4 19v-8h14v8h-4v-4H8v4z" fill="#2f8fd8" /></svg>, open: true },
  { icon: <div className="relative pt-[9px] pl-[11px]"><Disc size={18} ring="#e8eef2" /><div className="absolute top-[3px] left-[4px]"><Bubble size={13} body="#1d2a2c" dot="#2e403f" /></div><div className="absolute top-[6px] left-[9px] h-[7px] w-[2px] bg-[#e8eef2]" /></div>, open: true },
  { icon: <svg width="24" height="24" viewBox="0 0 24 24"><path d="M17 0l7 3v18l-7 3L6 13.5 2 17l-2-1V8l2-1 4 3.5z" fill="#1f8ad2" /><path d="M17 6.5L9.5 12 17 17.5z" fill="#2e403f" /><path d="M17 0l7 3v18l-7 3z" fill="#3aa8ee" /><path d="M0 8l2-1 15 14v3z" fill="#1272b8" /></svg>, open: true },
  { icon: <Badged><Disc size={13} ring="#dfe8ee" /></Badged>, open: true, active: true },
];

const Speaker = () => (
  <svg width="16" height="14" viewBox="0 0 16 14" fill="none" stroke="#dfe5e5" strokeWidth="1.2">
    <path d="M1 5h2.5L7 2v10L3.5 9H1z" />
    <path d="M9 5q1.5 2 0 4M11.2 3.5q2.5 3.5 0 7M13.4 2q3 5 0 10" opacity="0.7" />
  </svg>
);

const Taskbar = () => (
  <div className="flex h-10 items-stretch bg-[#2e403f] text-white">
    <Cell className="w-[49px]"><FaWindows size={17} color="#fff" /></Cell>
    <div className="ml-[3px] flex">
      {apps.map((a, i) => (
        <div key={i} className={"flex w-[48.95px] flex-col items-center " + (a.active ? "bg-[#5b6b69]" : "")}>
          <Cell className="h-[38px] w-full">{a.icon}</Cell>
          <div className={"h-[2px] " + (a.active ? "w-full bg-[#7fb9ec]" : a.open ? "w-10 bg-[#7fb9ec]" : "w-10")} />
        </div>
      ))}
    </div>
    <div className="ml-auto flex w-[389px] shrink-0 items-center">
      <Cell className="h-[22px] w-[22px] rounded-full border-2 border-white bg-[#1893dc] text-[15px] font-bold">?</Cell>
      <Cell className="ml-[4px] w-6"><ChevronUp size={18} strokeWidth={1.8} /></Cell>
      <Cell className="w-6"><svg width="16" height="12" viewBox="0 0 16 12"><path d="M3.5 12a3.5 3.5 0 0 1-.3-6.9A4.7 4.7 0 0 1 12.3 4.3 3.9 3.9 0 0 1 12 12z" fill="#23bfd0" /><path d="M5.5 7l2 2 3.5-3.5" fill="none" stroke="#fff" strokeWidth="1.3" /></svg></Cell>
      <Cell className="w-6"><svg width="15" height="13" viewBox="0 0 15 13" fill="#cf2a2a"><circle cx="7" cy="6.5" r="3" /><circle cx="12" cy="3" r="2" /><circle cx="2.5" cy="8" r="2" /><circle cx="11.5" cy="9.5" r="2" /><circle cx="5" cy="11.3" r="1.5" /><circle cx="6.5" cy="1.8" r="1.5" /><circle cx="7" cy="6.5" r="1.2" fill="#2e403f" /></svg></Cell>
      <Cell className="w-6"><svg width="12" height="14" viewBox="0 0 12 14"><path d="M2 1l2-1h4l2 1v4q0 3-2.500 4v1L12 11.500V14H0v-2.500L4.500 10V9Q2 8 2 5z" fill="#9aa4a3" /><path d="M3.500 4.500h2M6.500 4.500h2" stroke="#2e403f" /></svg></Cell>
      <Cell className="w-6"><svg width="16" height="15" viewBox="0 0 16 15" fill="none" stroke="#d5dcdb" strokeWidth="1.2"><path d="M0 1h9M0 4h7M0 7h5M7.5 8h2.5l4-3v9l-4-3H7.5z" /></svg></Cell>
      <Cell className="w-[25px]"><svg width="12" height="16" viewBox="0 0 12 16" fill="none" stroke="#e8eded" strokeWidth="1.2"><path d="M2.5 5V1h5v4M1 5h8v9.5H1zM6 12l2.5 2.5L12 11" /></svg></Cell>
      <Cell className="w-6"><svg width="16" height="16" viewBox="0 0 16 16"><path d="M7 0.5l6.5 2v5c0 3-3 5.5-6.5 7C3.5 13 .5 10.5.5 7.5v-5z" fill="#fff" /><path d="M7 1v13M1 7h12" stroke="#1d2928" strokeWidth="1.4" /><circle cx="11.5" cy="11.5" r="4.3" fill="#23a05a" /><path d="M9.5 11.5l1.5 1.5 2.5-3" stroke="#fff" fill="none" /></svg></Cell>
      <Cell className="w-6"><ShieldOk size={15} /></Cell>
      <Cell className="w-[25px]"><svg width="13" height="13" viewBox="0 0 13 13" fill="none" stroke="#dfe5e5" strokeWidth="1.1"><path d="M1 12Q1 1 12.5 1M4 12.5Q4 4 12.5 4M7 12.5Q7 7 12.5 7" /><circle cx="11" cy="11" r="1" fill="#fff" /></svg></Cell>
      <Cell className="w-6"><Speaker /></Cell>
      <div className="w-[62px] pb-[2px] text-center text-[12px] leading-[17px] tracking-[-0.35px] whitespace-nowrap">
        <div>12:06 a. m.</div>
        <div>07/10/2022</div>
      </div>
      <div className="relative ml-[17px]">
        <svg width="17" height="16" viewBox="0 0 17 16"><path d="M0 0h17v12h-9l-4 4v-4H0z" fill="#fff" /><path d="M2.5 3.2h12M2.5 6h12M2.5 8.8h8" stroke="#2e403f" strokeWidth="1.2" /></svg>
        <div className="absolute top-[7px] left-[7px] flex h-[17px] w-[17px] items-center justify-center rounded-full border border-[#aab4b3] bg-[#3a4b4a] text-[10px] font-bold">19</div>
      </div>
      <div className="mr-[5px] ml-auto h-full w-px bg-[#6d7a79]" />
    </div>
  </div>
);

export default function App() {
  return (
    <div className="h-[900px] w-[1600px] overflow-hidden bg-white font-['Open_Sans','Noto_Sans',sans-serif]">
      <TabStrip />
      <AddressBar />
      <BookmarkBar />
      <Editor />
      <Taskbar />
    </div>
  );
}
